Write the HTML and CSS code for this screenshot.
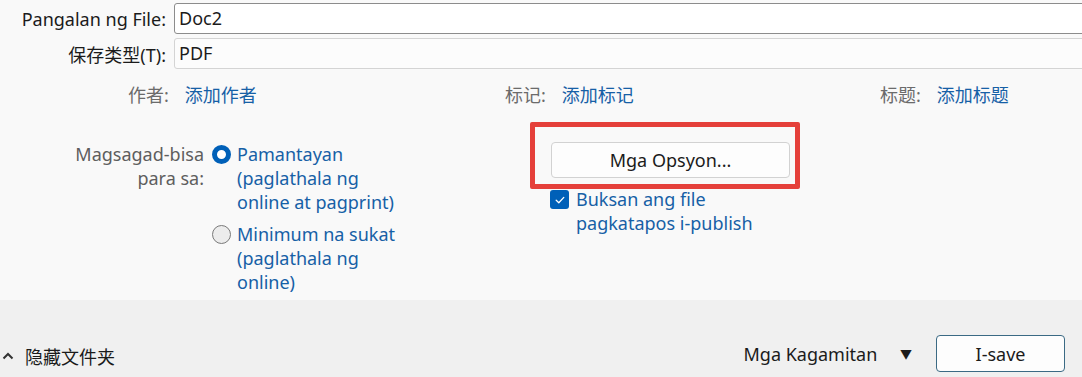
FILE: index.html
```html
<!DOCTYPE html>
<html lang="fil">
<head>
  <meta charset="UTF-8" />
  <meta name="viewport" content="width=device-width, initial-scale=1.0"/>
  <title>I-save bilang PDF</title>
  <link rel="stylesheet" href="styles.css">
</head>
<body>
  <div class="dialog">
    <div class="main">
      <div class="field-row first">
        <label class="field-label">Pangalan ng File:</label>
        <div class="field-input name-input">Doc2</div>
      </div>
      <div class="field-row">
        <label class="field-label">保存类型(T):</label>
        <div class="field-input type-input">PDF</div>
      </div>

      <div class="meta-row">
        <div class="meta"><span class="meta-label">作者:</span><a class="link">添加作者</a></div>
        <div class="meta"><span class="meta-label">标记:</span><a class="link">添加标记</a></div>
        <div class="meta"><span class="meta-label">标题:</span><a class="link">添加标题</a></div>
      </div>

      <div class="options-row">
        <div class="opt-label">Magsagad-bisa<br>para sa:</div>
        <div class="radio-group">
          <div class="radio-item">
            <span class="radio checked"></span>
            <span class="radio-text">Pamantayan<br>(paglathala ng<br>online at pagprint)</span>
          </div>
          <div class="radio-item">
            <span class="radio"></span>
            <span class="radio-text">Minimum na sukat<br>(paglathala ng<br>online)</span>
          </div>
        </div>
        <div class="opt-side">
          <div class="btn-wrap">
            <button class="btn options-btn">Mga Opsyon...</button>
            <div class="highlight"></div>
          </div>
          <div class="check-item">
            <span class="checkbox">
              <svg width="12" height="12" viewBox="0 0 12 12"><path d="M2.2 6.3 L4.8 8.8 L9.8 3.4" fill="none" stroke="#fff" stroke-width="1.3" stroke-linecap="round" stroke-linejoin="round"/></svg>
            </span>
            <span class="check-text">Buksan ang file<br>pagkatapos i-publish</span>
          </div>
        </div>
      </div>
    </div>

    <div class="footer">
      <div class="hide-folders">
        <svg class="chev" width="12" height="8" viewBox="0 0 12 8"><path d="M1.5 6.5 L6 2 L10.5 6.5" fill="none" stroke="#333" stroke-width="2"/></svg>
        <span>隐藏文件夹</span>
      </div>
      <div class="footer-right">
        <div class="tools">Mga Kagamitan <span class="caret">▼</span></div>
        <button class="btn save-btn">I-save</button>
      </div>
    </div>
  </div>
</body>
</html>
```

FILE: styles.css
```css
body {
  margin: 0;
  padding: 0;
  overflow: hidden;
  font-family: "Noto Sans", "Noto Sans CJK SC", sans-serif;
  font-size: 18px;
  color: #1b1b1b;
  background: #f9f9f9;
}

.dialog {
  width: 1082px;
  height: 377px;
  display: flex;
  flex-direction: column;
}

.main {
  height: 300px;
  background: #f9f9f9;
}

.field-row {
  display: flex;
  align-items: center;
  gap: 8px;
  margin-top: 4px;
}

.field-row.first {
  margin-top: 3px;
}

.field-label {
  width: 166px;
  text-align: right;
  flex-shrink: 0;
}

.field-input {
  flex: 1;
  height: 29px;
  line-height: 29px;
  padding-left: 4px;
  margin-right: -10px;
  border-radius: 3px;
  background: #fff;
}

.name-input {
  border: 1px solid #8c8c8c;
}

.type-input {
  border: 1px solid #d4d4d4;
  background: #fcfcfc;
}

.meta-row {
  display: grid;
  grid-template-columns: 377px 375px auto;
  padding-left: 128px;
  margin-top: 14px;
  line-height: 24px;
}

.meta {
  display: flex;
  gap: 16px;
}

.meta-label {
  color: #6b6b6b;
}

.link {
  color: #1660a6;
}

.options-row {
  display: flex;
  margin-top: 35px;
  line-height: 24px;
}

.opt-label {
  width: 204px;
  text-align: right;
  color: #5e5e5e;
  flex-shrink: 0;
}

.radio-group {
  width: 310px;
  padding-left: 8px;
  display: flex;
  flex-direction: column;
  gap: 8px;
}

.radio-item {
  display: flex;
  gap: 6px;
}

.radio {
  width: 19px;
  height: 19px;
  margin-top: 3px;
  border-radius: 50%;
  border: 1px solid #7a7a7a;
  background: #ececec;
  flex-shrink: 0;
  box-sizing: border-box;
}

.radio.checked {
  border: 5px solid #0060b8;
  background: #fff;
}

.radio-text, .check-text {
  color: #1660a6;
}

.opt-side {
  padding-left: 29px;
  display: flex;
  flex-direction: column;
}

.btn {
  font-family: inherit;
  font-size: 18px;
  color: #1b1b1b;
  background: #fdfdfd;
  border: 1px solid #d2d2d2;
  border-radius: 4px;
  cursor: pointer;
}

.btn-wrap {
  position: relative;
}

.options-btn {
  width: 239px;
  height: 36px;
  display: block;
}

.highlight {
  position: absolute;
  left: -21px;
  top: -20px;
  width: 260px;
  height: 57px;
  border: 5px solid #e5403a;
  border-radius: 2px;
}

.check-item {
  display: flex;
  gap: 7px;
  margin-top: 9px;
  margin-left: -1px;
}

.checkbox {
  width: 19px;
  height: 19px;
  margin-top: 3px;
  border-radius: 3px;
  background: #0060b8;
  display: flex;
  align-items: center;
  justify-content: center;
  flex-shrink: 0;
}

.footer {
  flex: 1;
  background: #f0f0f0;
  display: flex;
  justify-content: space-between;
  align-items: center;
  padding: 35px 17px 5px 0;
}

.hide-folders {
  display: flex;
  align-items: center;
  gap: 11px;
  padding-left: 2px;
  margin-top: 4px;
}

.footer-right {
  display: flex;
  align-items: center;
}

.tools {
  margin-right: 24px;
}

.caret {
  font-size: 12px;
  margin-left: 18px;
  vertical-align: 2px;
}

.save-btn {
  width: 129px;
  height: 37px;
  border: 1px solid #3b6a84;
  background: #fdfdfd;
}
```
